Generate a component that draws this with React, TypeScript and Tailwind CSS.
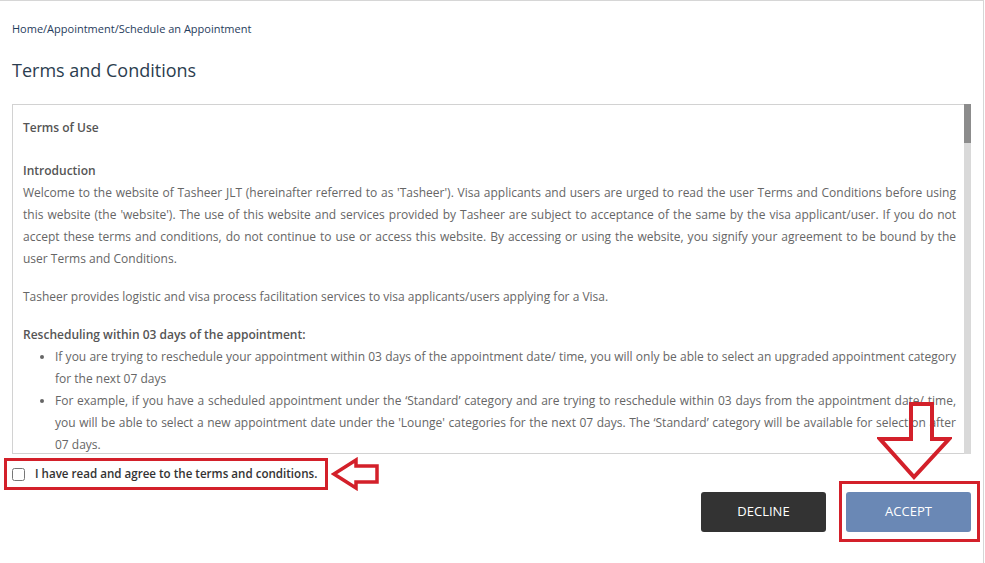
import React, { useState } from 'react';

const FONT = "font-['Open_Sans','Liberation_Sans',sans-serif]";

interface Section {
  title: string;
  paragraphs?: string[];
  bullets?: string[];
}

const moreSections: Section[] = [
  {
    title: 'Cancellation of the appointment:',
    bullets: [
      'Appointments can be cancelled up to 24 hours before the scheduled appointment date/ time from the Manage Appointment section of this website.',
      'Applicants who do not attend the appointment and do not cancel it in advance will need to book a new appointment.',
    ],
  },
  {
    title: 'Fees and charges:',
    paragraphs: [
      'All service fees paid to Tasheer are non-refundable, except where expressly stated otherwise. Visa fees are collected on behalf of the relevant authority and are subject to their policies.',
    ],
  },
  {
    title: 'Documents:',
    paragraphs: [
      'Visa applicants are responsible for submitting complete and correct documents. Tasheer is not responsible for any delay or refusal of a visa caused by incomplete, incorrect or forged documents.',
    ],
  },
  {
    title: 'Privacy:',
    paragraphs: [
      'Personal data provided by visa applicants/users is collected and processed only for the purpose of visa process facilitation and will be handled in line with applicable data protection laws.',
    ],
  },
  {
    title: 'Limitation of liability:',
    paragraphs: [
      'Tasheer shall not be liable for any direct, indirect or consequential loss arising from the use of this website or the services provided, including the decision on a visa application, which rests solely with the issuing authority.',
    ],
  },
  {
    title: 'Changes to these terms:',
    paragraphs: [
      'Tasheer may revise these Terms and Conditions at any time without prior notice. By continuing to use this website you agree to be bound by the current version of these Terms and Conditions.',
    ],
  },
];

function LeftArrow() {
  return (
    <svg width="50" height="34" viewBox="0 0 50 34" className="ml-[3px] shrink-0">
      <path
        d="M3 17 L25 3 L25 9 L46 9 L46 25 L25 25 L25 31 Z"
        fill="none"
        stroke="#d3202a"
        strokeWidth="3.5"
        strokeLinejoin="miter"
      />
    </svg>
  );
}

function DownArrow() {
  return (
    <svg width="75" height="80" viewBox="0 0 75 80">
      <path
        d="M34 3 L55 3 L55 38 L72 38 L37 76 L3 38 L34 38 Z"
        fill="none"
        stroke="#d3202a"
        strokeWidth="4"
        strokeLinejoin="miter"
      />
    </svg>
  );
}

export default function App() {
  const [agreed, setAgreed] = useState(false);

  return (
    <div className={`${FONT} w-[984px] min-h-[563px] bg-white border-t border-r border-[#d6d6d6] pl-3 pr-3 pt-5`}>
      <div className="text-[11px] leading-4 text-[#1f3c5c]">
        Home/Appointment/Schedule an Appointment
      </div>
      <h1 className="mt-5 text-[18px] leading-[26px] text-[#2b3d4f]">Terms and Conditions</h1>

      <div className="mt-[21px] h-[350px] flex border border-r-0 border-[#d2d2d2]">
        <div className="flex-1 overflow-y-auto [scrollbar-width:none] pl-[10px] pr-[8px] pt-3 pb-4 text-[12px] leading-[22px] text-[#666] text-justify">
          <p className="font-semibold text-[#555] mb-[21px]">Terms of Use</p>

          <p className="font-semibold text-[#555]">Introduction</p>
          <p className="mb-4">
            Welcome to the website of Tasheer JLT (hereinafter referred to as 'Tasheer'). Visa applicants and users are urged to
            read the user Terms and Conditions before using this website (the 'website'). The use of this website and services
            provided by Tasheer are subject to acceptance of the same by the visa applicant/user. If you do not accept these terms
            and conditions, do not continue to use or access this website. By accessing or using the website, you signify your
            agreement to be bound by the user Terms and Conditions.
          </p>
          <p className="mb-4">
            Tasheer provides logistic and visa process facilitation services to visa applicants/users applying for a Visa.
          </p>

          <p className="font-semibold text-[#555]">Rescheduling within 03 days of the appointment:</p>
          <ul className="list-disc pl-8 mb-4">
            <li>
              If you are trying to reschedule your appointment within 03 days of the appointment date/ time, you will only be able
              to select an upgraded appointment category for the next 07 days
            </li>
            <li>
              For example, if you have a scheduled appointment under the ‘Standard’ category and are trying to reschedule within 03
              days from the appointment date/ time, you will be able to select a new appointment date under the 'Lounge' categories
              for the next 07 days. The ‘Standard’ category will be available for selection after 07 days.
            </li>
          </ul>

          {moreSections.map((section) => (
            <div key={section.title} className="mb-4">
              <p className="font-semibold text-[#555]">{section.title}</p>
              {section.paragraphs?.map((text, i) => (
                <p key={i}>{text}</p>
              ))}
              {section.bullets && (
                <ul className="list-disc pl-8">
                  {section.bullets.map((text, i) => (
                    <li key={i}>{text}</li>
                  ))}
                </ul>
              )}
            </div>
          ))}
        </div>
        {/* scrollbar */}
        <div className="w-[7px] bg-[#d9d9d9] -mt-px -mb-px">
          <div className="h-[39px] bg-[#8c8c8c]" />
        </div>
      </div>

      <div className="mt-[3px] -ml-2 flex items-center">
        <label className="flex items-center w-[324px] h-[32px] border-[3px] border-[#d3202a] pl-[5px] cursor-pointer">
          <input
            type="checkbox"
            checked={agreed}
            onChange={(e) => setAgreed(e.target.checked)}
            className="w-[13px] h-[13px] m-0 accent-[#6a88b5]"
          />
          <span className="ml-[10px] text-[11.6px] font-semibold text-[#333] whitespace-nowrap">
            I have read and agree to the terms and conditions.
          </span>
        </label>
        <LeftArrow />
      </div>

      <div className="mt-px flex justify-end gap-5">
        <button className="w-[125px] h-[40px] rounded-[3px] bg-[#333333] text-white text-[13px] uppercase">
          Decline
        </button>
        <div className="relative">
          <button className="w-[125px] h-[40px] rounded-[3px] bg-[#6a88b5] text-white text-[13px] uppercase">
            Accept
          </button>
          <span className="pointer-events-none absolute -left-[7px] -right-[9px] -top-[11px] -bottom-[10px] border-[3px] border-[#d3202a]" />
          <span className="pointer-events-none absolute left-[31px] -top-[91px]">
            <DownArrow />
          </span>
        </div>
      </div>
    </div>
  );
}
